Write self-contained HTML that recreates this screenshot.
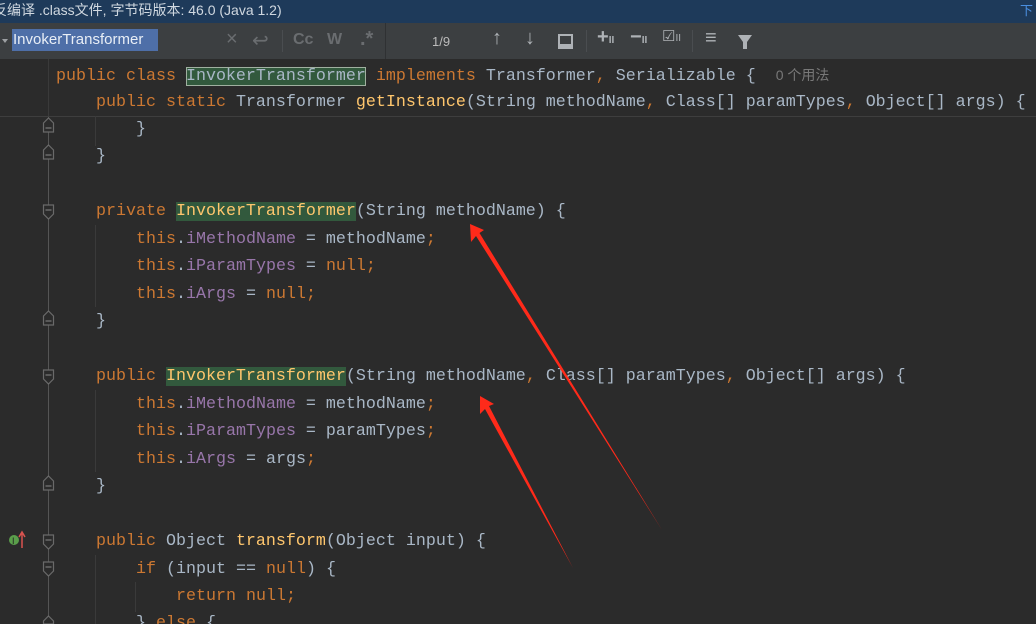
<!DOCTYPE html>
<html><head><meta charset="utf-8"><style>
html,body{margin:0;width:1036px;height:624px;overflow:hidden;}
body{background:#2b2b2b;position:relative;font-family:"Liberation Mono",monospace;}
.title{position:absolute;left:0;top:0;width:1036px;height:23px;background:#1e3a5a;color:#d0d8e0;font:14px "Liberation Sans","Noto Sans CJK SC",sans-serif;line-height:20px;overflow:hidden;white-space:nowrap}
.sb{position:absolute;left:0;top:23px;width:1036px;height:36px;background:#3c3f41;font-family:"Liberation Sans",sans-serif;}
.ln{position:absolute;white-space:pre;font-size:16.67px;line-height:27px;height:27px;color:#a9b7c6;}
.k{color:#cc7832}.m{color:#ffc66d}.f{color:#9876aa}.hl{background:#32593d;}
.hb{outline:1px solid #a0b0a0;outline-offset:-1px}
.ic{position:absolute;color:#aeb2b6;font-size:20px;}
</style></head><body>
<div class="title"><span style="margin-left:-7px">反编译 .class文件, 字节码版本: 46.0 (Java 1.2)</span></div>
<div class="sb">
<div style="position:absolute;left:2px;top:16px;width:0;height:0;border-left:3px solid transparent;border-right:3px solid transparent;border-top:4px solid #9da0a3"></div>
<div style="position:absolute;left:12px;top:6px;width:145px;height:22px;background:#4e6fa8;color:#e8eef6;font-size:15px;line-height:22px;padding-left:1px">InvokerTransformer</div>
<span class="ic" style="left:226px;top:5px;color:#6a6d70">×</span>
<span class="ic" style="left:252px;top:5px;color:#6a6d70">↩</span>
<div style="position:absolute;left:282px;top:7px;width:1px;height:22px;background:#4a4d50"></div>
<span class="ic" style="left:293px;top:8px;color:#6a6d70;font-weight:bold;font-size:16px">Cc</span>
<span class="ic" style="left:327px;top:8px;color:#6a6d70;font-weight:bold;font-size:16px">W</span>
<span class="ic" style="left:360px;top:5px;color:#6a6d70;font-weight:bold">.*</span>
<div style="position:absolute;left:385px;top:0;width:1px;height:36px;background:#2f3133"></div>
<span style="position:absolute;left:432px;top:11px;color:#bbb;font-size:13px">1/9</span>
<span class="ic" style="left:492px;top:4px;font-weight:bold">↑</span>
<span class="ic" style="left:525px;top:4px;font-weight:bold">↓</span>
<div style="position:absolute;left:558px;top:11px;border:2px solid #aeb2b6;border-bottom-width:5px;box-sizing:border-box;width:15px;height:15px"></div>
<div style="position:absolute;left:586px;top:7px;width:1px;height:22px;background:#4a4d50"></div>
<span class="ic" style="left:597px;top:3px;font-weight:bold">+<span style="font-size:10px">II</span></span>
<span class="ic" style="left:630px;top:3px;font-weight:bold">−<span style="font-size:10px">II</span></span>
<span class="ic" style="left:662px;top:4px;font-size:15px">☑<span style="font-size:10px">II</span></span>
<div style="position:absolute;left:692px;top:7px;width:1px;height:22px;background:#4a4d50"></div>
<span class="ic" style="left:705px;top:4px;font-weight:bold">≡</span>
<svg style="position:absolute;left:737px;top:11px" width="16" height="16"><path d="M1 1H15L10 8V15H6V8Z" fill="#aeb2b6"/></svg>
</div>
<div style="position:absolute;left:1020px;top:0;color:#4a8fe0;font-size:13px;font-family:'Noto Sans CJK SC',sans-serif">下</div>
<div style="position:absolute;left:48px;top:116px;width:1px;height:508px;background:#555"></div>
<div style="position:absolute;left:48px;top:59px;width:1px;height:57px;background:#3a3a3a"></div>
<div style="position:absolute;left:0;top:116px;width:1036px;height:1px;background:#3e3e3e"></div>
<div style="position:absolute;left:95px;top:116px;width:1px;height:30px;background:#3a3a3a"></div>
<div style="position:absolute;left:95px;top:225px;width:1px;height:82px;background:#3a3a3a"></div>
<div style="position:absolute;left:95px;top:390px;width:1px;height:82px;background:#3a3a3a"></div>
<div style="position:absolute;left:95px;top:555px;width:1px;height:69px;background:#3a3a3a"></div>
<div style="position:absolute;left:135px;top:582px;width:1px;height:30px;background:#3a3a3a"></div>
<svg style="position:absolute;left:0;top:0" width="60" height="624">
<g fill="#2b2b2b" stroke="#6a6a6a" stroke-width="1.2">
<path d="M43.5 132V123L48.5 118L53.5 123V132Z"/><path d="M43.5 159V150L48.5 145L53.5 150V159Z"/>
<path d="M43.5 205V214L48.5 219L53.5 214V205Z"/><path d="M43.5 325V316L48.5 311L53.5 316V325Z"/>
<path d="M43.5 370V379L48.5 384L53.5 379V370Z"/><path d="M43.5 490V481L48.5 476L53.5 481V490Z"/>
<path d="M43.5 535V544L48.5 549L53.5 544V535Z"/><path d="M43.5 562V571L48.5 576L53.5 571V562Z"/>
<path d="M43.5 624V621L48.5 616L53.5 621V624Z"/>
</g>
<g stroke="#8a8a8a"><path d="M45.5 128H51.5M45.5 155H51.5M45.5 210H51.5M45.5 321H51.5M45.5 375H51.5M45.5 486H51.5M45.5 540H51.5M45.5 567H51.5"/></g>
<circle cx="14" cy="540" r="5" fill="#5a9e4b"/><text x="12" y="544" font-size="9" fill="#222" font-family="Liberation Sans">I</text>
<path d="M22 548V533M19 537L22 532L25 537" stroke="#d9534f" stroke-width="1.5" fill="none"/>
</svg>
<div class="ln" style="left:56px;top:62px"><span class="k">public class </span><span class="hl hb">InvokerTransformer</span><span class="k"> implements </span>Transformer<span class="k">, </span>Serializable {  <span style="color:#787878;font-family:'Liberation Sans','Noto Sans CJK SC',sans-serif;font-size:14px">0 个用法</span></div>
<div class="ln" style="left:96px;top:89px"><span class="k">public static </span>Transformer <span class="m">getInstance</span>(String methodName<span class="k">, </span>Class[] paramTypes<span class="k">, </span>Object[] args) {</div>
<div class="ln" style="left:136px;top:116px">}</div>
<div class="ln" style="left:96px;top:143px">}</div>
<div class="ln" style="left:96px;top:198px"><span class="k">private </span><span class="m hl">InvokerTransformer</span>(String methodName) {</div>
<div class="ln" style="left:136px;top:226px"><span class="k">this</span>.<span class="f">iMethodName</span> = methodName<span class="k">;</span></div>
<div class="ln" style="left:136px;top:253px"><span class="k">this</span>.<span class="f">iParamTypes</span> = <span class="k">null;</span></div>
<div class="ln" style="left:136px;top:281px"><span class="k">this</span>.<span class="f">iArgs</span> = <span class="k">null;</span></div>
<div class="ln" style="left:96px;top:308px">}</div>
<div class="ln" style="left:96px;top:363px"><span class="k">public </span><span class="m hl">InvokerTransformer</span>(String methodName<span class="k">, </span>Class[] paramTypes<span class="k">, </span>Object[] args) {</div>
<div class="ln" style="left:136px;top:391px"><span class="k">this</span>.<span class="f">iMethodName</span> = methodName<span class="k">;</span></div>
<div class="ln" style="left:136px;top:418px"><span class="k">this</span>.<span class="f">iParamTypes</span> = paramTypes<span class="k">;</span></div>
<div class="ln" style="left:136px;top:446px"><span class="k">this</span>.<span class="f">iArgs</span> = args<span class="k">;</span></div>
<div class="ln" style="left:96px;top:473px">}</div>
<div class="ln" style="left:96px;top:528px"><span class="k">public </span>Object <span class="m">transform</span>(Object input) {</div>
<div class="ln" style="left:136px;top:556px"><span class="k">if </span>(input == <span class="k">null</span>) {</div>
<div class="ln" style="left:176px;top:583px"><span class="k">return null;</span></div>
<div class="ln" style="left:136px;top:610px">} <span class="k">else</span> {</div>
<svg style="position:absolute;left:0;top:0" width="1036" height="624">
<path d="M470 224L484 230L479.5 233L662 530L476 236L471 242Z" fill="#ff2a1a"/>
<path d="M480 396L494 404L489 406L573 568L485 409L480 414Z" fill="#ff2a1a"/>
</svg>
</body></html>
